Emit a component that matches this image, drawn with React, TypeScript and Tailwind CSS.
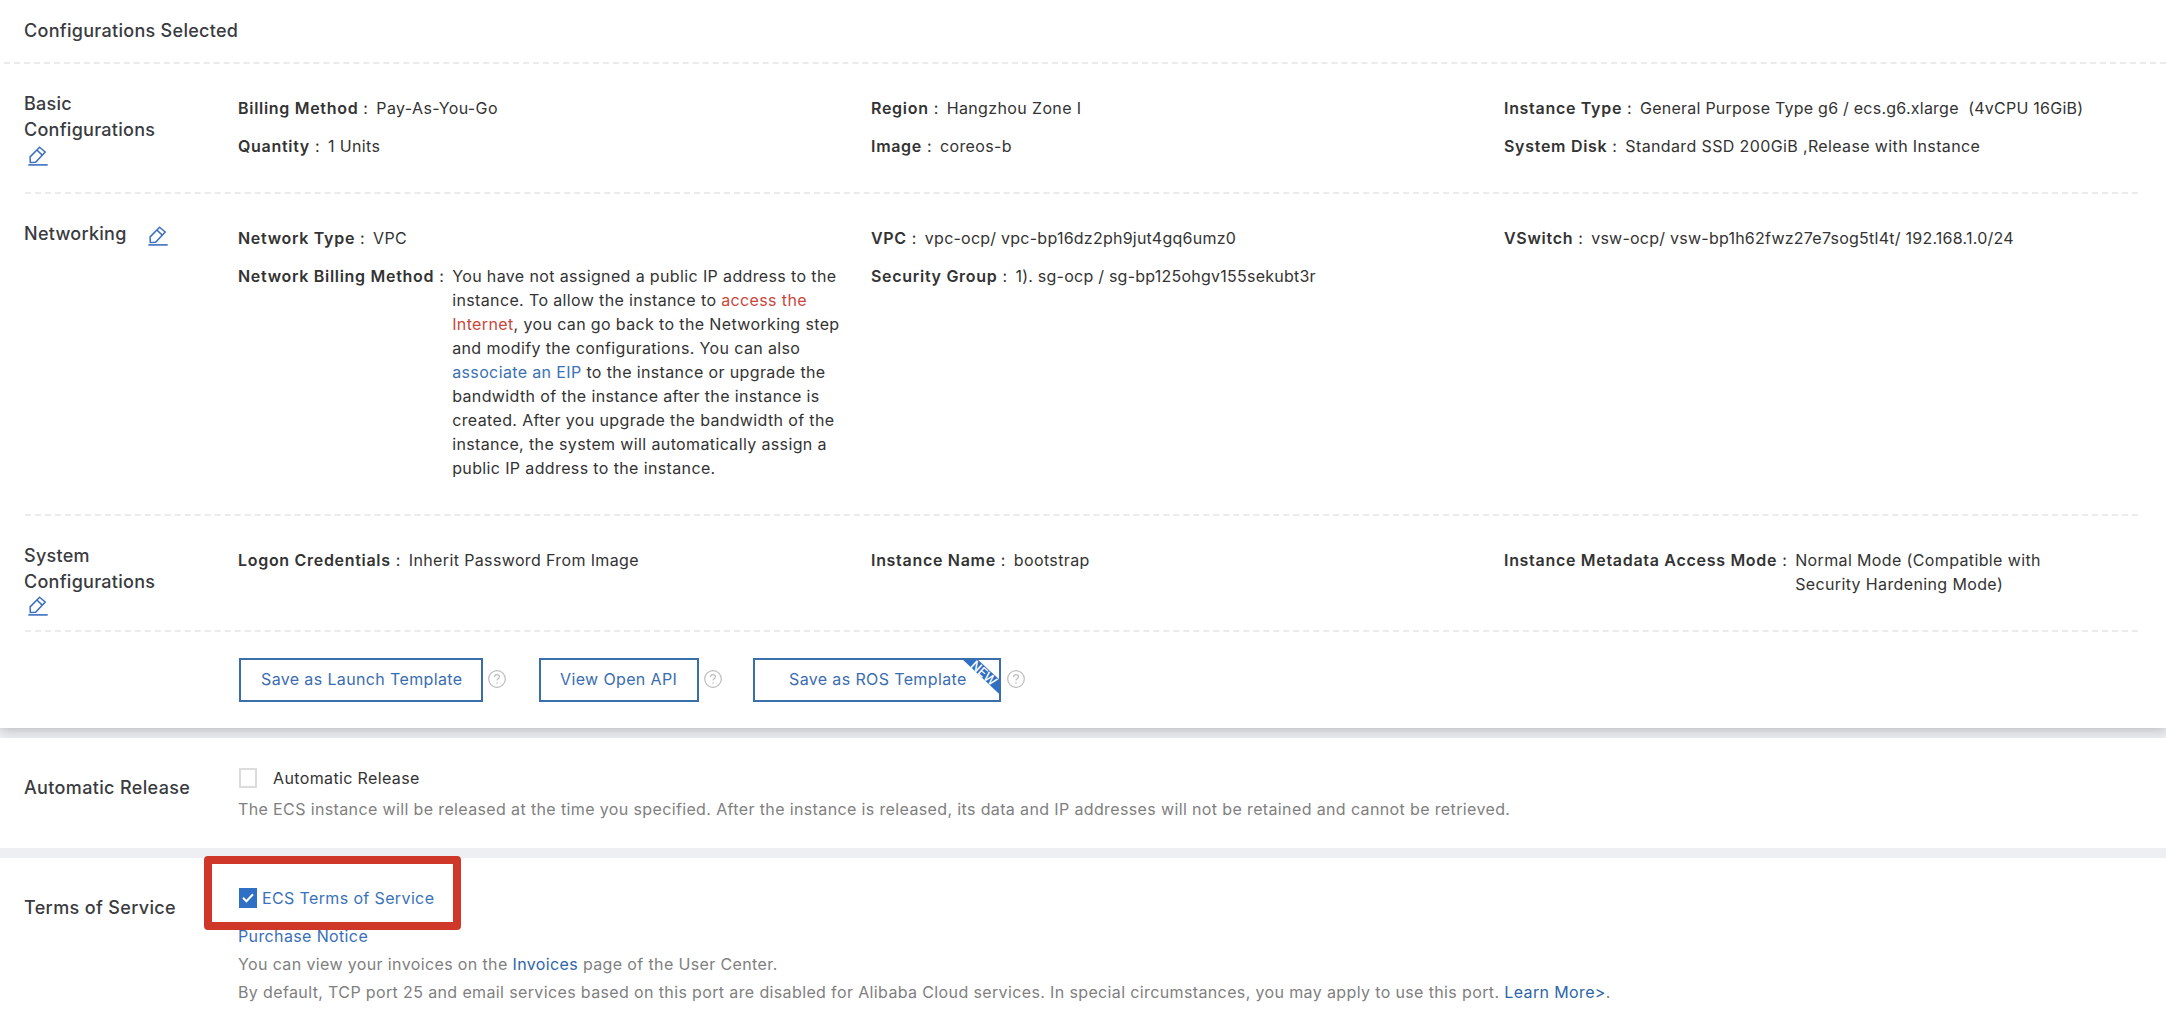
import type { ReactNode } from 'react';

function EditIcon() {
  return (
    <svg width="20" height="20" viewBox="0 0 20 20" fill="none" stroke="#3a6fc0" strokeWidth="1.5" strokeLinejoin="miter">
      <path d="M11.6 1.2 L17.2 6 L7.6 16.2 L2.3 16.4 L2.1 10.9 Z" />
      <path d="M8.9 4 L14.2 9.1" />
      <path d="M0.3 18.9 H19.7" strokeWidth="1.6" />
    </svg>
  );
}

function HelpIcon() {
  return (
    <svg width="18" height="18" viewBox="0 0 18 18" fill="none" stroke="#bdbdbd" strokeWidth="1.2">
      <circle cx="9" cy="9" r="8.3" />
      <path d="M6.5 7.2 C6.5 5.5 7.5 4.6 9 4.6 C10.5 4.6 11.5 5.5 11.5 6.8 C11.5 8.4 9 8.6 9 10.6" />
      <path d="M9 12.2 V13.7" />
    </svg>
  );
}

function Field({ label, children, tight }: { label: string; children: ReactNode; tight?: boolean }) {
  return (
    <div className="flex leading-6">
      <span className="font-semibold tracking-[0.7px]">{label}</span>
      <span className="ml-[5px] w-[13px]">:</span>
      <span className={tight ? 'whitespace-pre tracking-[0.24px]' : 'whitespace-pre'}>{children}</span>
    </div>
  );
}

function Row({ title, children, className }: { title: ReactNode; children: ReactNode; className: string }) {
  return (
    <div className={`ml-[25px] mr-7 flex border-b-2 border-dashed border-[#ebebeb] ${className}`}>
      <div className="-ml-px w-[214px] shrink-0 pt-[27px] text-lg leading-[26px] font-medium tracking-[0.27px] text-[#3a3b40]">
        {title}
      </div>
      <div className="grid grid-cols-[633px_633px_633px] content-start gap-y-3.5 pt-8">{children}</div>
    </div>
  );
}

function OutlineButton({ children, className }: { children: ReactNode; className: string }) {
  return (
    <button
      className={`relative flex h-11 items-center overflow-hidden border-2 border-[#3a6fac] pb-[3px] whitespace-nowrap text-[#3a6db0] ${className}`}
    >
      {children}
    </button>
  );
}

function Section({ title, children, className }: { title: string; children: ReactNode; className: string }) {
  return (
    <section className={`relative flex bg-white pl-6 ${className}`}>
      <h2 className="w-[214px] shrink-0 pt-[37px] text-lg leading-[26px] font-medium tracking-[0.35px] text-[#3a3b40]">{title}</h2>
      <div className="leading-6 text-[#808080]">{children}</div>
    </section>
  );
}

export default function App() {
  return (
    <main
      className="flex h-[1032px] w-[2166px] flex-col gap-2.5 overflow-hidden bg-[#eeeff3] text-base tracking-[0.37px] text-[#333]"
      style={{ fontFamily: 'Inter, "Liberation Sans", sans-serif' }}
    >
      <section className="relative h-[728px] shrink-0 bg-white shadow-[0_2px_12px_rgba(0,0,0,0.24)]">
        <h1 className="ml-1 h-16 border-b-2 border-dashed border-[#ebebeb] pt-[18px] pl-5 text-lg leading-[26px] font-medium tracking-[0.29px] text-[#3a3b40]">
          Configurations Selected
        </h1>

        <Row
          className="h-[130px]"
          title={
            <>
              Basic
              <br />
              Configurations
              <div className="mt-[3px] ml-1">
                <EditIcon />
              </div>
            </>
          }
        >
          <Field label="Billing Method">Pay-As-You-Go</Field>
          <Field label="Region">Hangzhou Zone I</Field>
          <Field label="Instance Type" tight>{'General Purpose Type g6 / ecs.g6.xlarge  (4vCPU 16GiB)'}</Field>
          <Field label="Quantity">1 Units</Field>
          <Field label="Image">coreos-b</Field>
          <Field label="System Disk">Standard SSD 200GiB ,Release with Instance</Field>
        </Row>

        <Row
          className="h-[322px]"
          title={
            <div className="flex">
              <span className="w-[124px]">Networking</span>
              <span className="pt-[5px]">
                <EditIcon />
              </span>
            </div>
          }
        >
          <Field label="Network Type">VPC</Field>
          <Field label="VPC" tight>vpc-ocp/ vpc-bp16dz2ph9jut4gq6umz0</Field>
          <Field label="VSwitch" tight>vsw-ocp/ vsw-bp1h62fwz27e7sog5tl4t/ 192.168.1.0/24</Field>
          <Field label="Network Billing Method">
            You have not assigned a public IP address to the
            <br />
            instance. To allow the instance to <a className="text-[#c8473c]">access the</a>
            <br />
            <a className="text-[#c8473c]">Internet</a>, you can go back to the Networking step
            <br />
            and modify the configurations. You can also
            <br />
            <a className="text-[#3a72b4]">associate an EIP</a> to the instance or upgrade the
            <br />
            bandwidth of the instance after the instance is
            <br />
            created. After you upgrade the bandwidth of the
            <br />
            instance, the system will automatically assign a
            <br />
            public IP address to the instance.
          </Field>
          <Field label="Security Group" tight>1). sg-ocp / sg-bp125ohgv155sekubt3r</Field>
        </Row>

        <Row
          className="h-[116px]"
          title={
            <>
              System
              <br />
              Configurations
              <div className="mt-px ml-1">
                <EditIcon />
              </div>
            </>
          }
        >
          <Field label="Logon Credentials">Inherit Password From Image</Field>
          <Field label="Instance Name">bootstrap</Field>
          <Field label="Instance Metadata Access Mode">
            Normal Mode (Compatible with
            <br />
            Security Hardening Mode)
          </Field>
        </Row>

        <div className="flex items-center pt-[26px] pl-[239px]">
          <OutlineButton className="w-[244px] pl-5">Save as Launch Template</OutlineButton>
          <span className="mr-[33px] ml-[5px] pb-0.5">
            <HelpIcon />
          </span>
          <OutlineButton className="w-40 pl-[19px]">View Open API</OutlineButton>
          <span className="mr-[31px] ml-[5px] pb-0.5">
            <HelpIcon />
          </span>
          <OutlineButton className="w-[248px] pl-[34px]">
            Save as ROS Template
            <svg className="absolute -top-0.5 -right-0.5" width="40" height="38" viewBox="0 0 40 38">
              <path d="M0 0 H15 L40 23 V37.5 Z" fill="#2f6fc4" />
              <text
                x="23"
                y="14.8"
                transform="rotate(42 23 14.8)"
                textAnchor="middle"
                dominantBaseline="central"
                fill="#fff"
                fontSize="13"
                fontWeight="500"
                letterSpacing="-0.3"
              >
                NEW
              </text>
            </svg>
          </OutlineButton>
          <span className="ml-1.5 pb-0.5">
            <HelpIcon />
          </span>
        </div>
      </section>

      <Section title="Automatic Release" className="h-[110px] shrink-0">
        <div className="mt-7 ml-px flex h-6 items-center text-[#333]">
          <span className="h-5 w-[18px] border-2 border-[#dcdcdc]" />
          <span className="ml-4 pb-px">Automatic Release</span>
        </div>
        <p className="mt-[7px]">
          The ECS instance will be released at the time you specified. After the instance is released, its data and IP addresses will not
          be retained and cannot be retrieved.
        </p>
      </Section>

      <Section title="Terms of Service" className="h-[174px] shrink-0">
        <div className="mt-7 ml-px flex h-6 items-center text-[#3a72b8]">
          <span className="flex h-5 w-[18px] items-center justify-center bg-[#2f6fc4]">
            <svg width="12" height="10" viewBox="0 0 12 10" fill="none" stroke="#fff" strokeWidth="2">
              <path d="M1 4.8 L4.4 8.2 L11 1.2" />
            </svg>
          </span>
          <a className="ml-[5px] pb-px">ECS Terms of Service</a>
        </div>
        <p className="mt-3.5">
          <a className="text-[#3a6fb8]">Purchase Notice</a>
        </p>
        <p className="mt-1">
          You can view your invoices on the <a className="text-[#2d66a8]">Invoices</a> page of the User Center.
        </p>
        <p className="mt-1">
          By default, TCP port 25 and email services based on this port are disabled for Alibaba Cloud services. In special
          circumstances, you may apply to use this port. <a className="text-[#2d66a8]">Learn More&gt;</a>.
        </p>
        <div className="absolute -top-0.5 left-[204px] h-[74px] w-[257px] rounded border-8 border-[#cf3728]" />
      </Section>
    </main>
  );
}
